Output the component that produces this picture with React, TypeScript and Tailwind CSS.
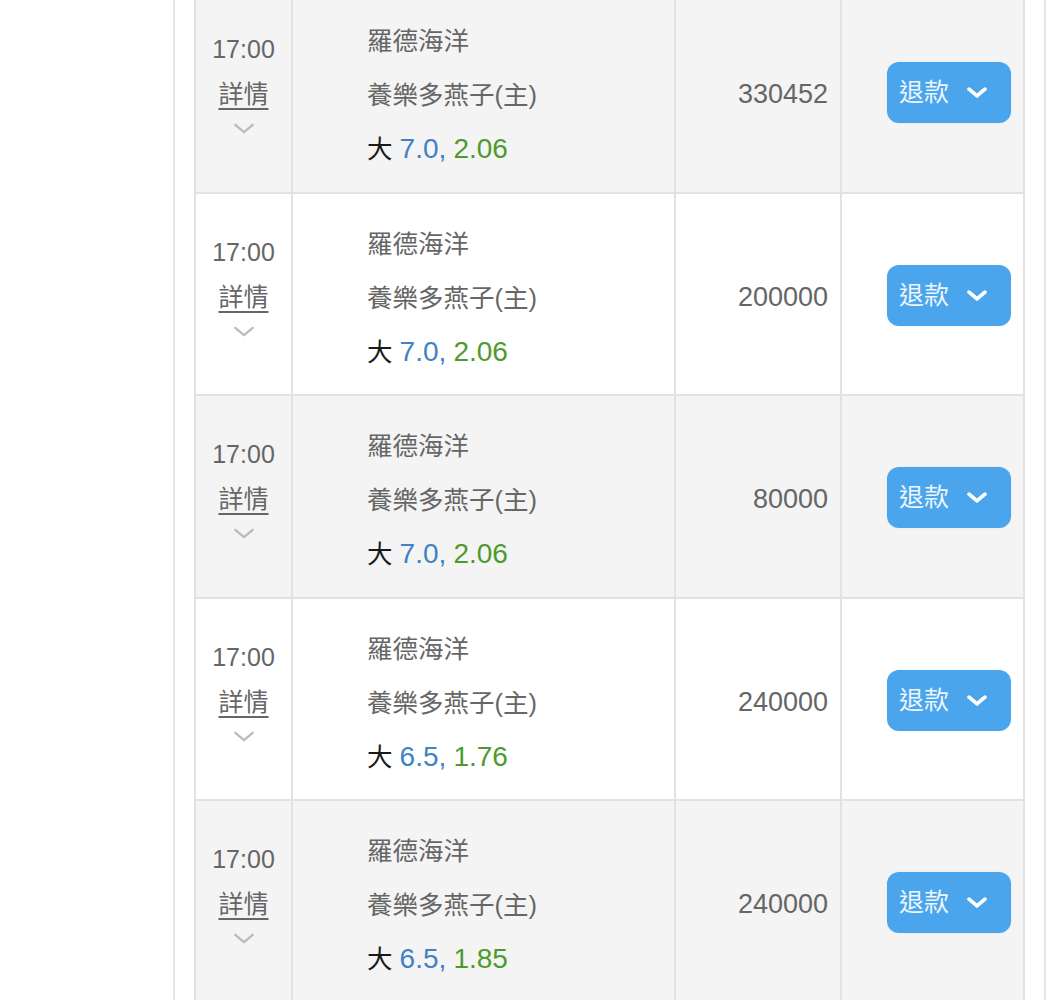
import React from "react";

const rows = [
  { amount: "330452", line: "7.0", odds: "2.06", bg: "bg-[#f4f4f4]" },
  { amount: "200000", line: "7.0", odds: "2.06", bg: "bg-white" },
  { amount: "80000", line: "7.0", odds: "2.06", bg: "bg-[#f4f4f4]" },
  { amount: "240000", line: "6.5", odds: "1.76", bg: "bg-white" },
  { amount: "240000", line: "6.5", odds: "1.85", bg: "bg-[#f4f4f4]" },
];

function Chevron({ className, stroke, width }: { className: string; stroke: string; width: number }) {
  return (
    <svg viewBox="0 0 24 12" className={className} fill="none">
      <path d="M2.5 2 L12 10 L21.5 2" stroke={stroke} strokeWidth={width} strokeLinecap="round" strokeLinejoin="round" />
    </svg>
  );
}

export default function App() {
  return (
    <div
      className="w-[1057px] h-[1000px] overflow-hidden bg-white flex"
      style={{ fontFamily: '"Liberation Sans", "Noto Sans CJK TC", sans-serif' }}
    >
      <div className="w-[173px] shrink-0" />
      <div className="w-[2px] shrink-0 bg-[#e6e6e6]" />
      <div className="w-[19px] shrink-0" />
      <div className="w-[831px] shrink-0 -mt-[9px] border-l-2 border-r-2 border-[#e2e2e2]">
        {rows.map((r, i) => (
          <div key={i} className={`flex h-[202.5px] border-b-2 border-[#e2e2e2] ${r.bg}`}>
            <div className="w-[97px] shrink-0 border-r-2 border-[#e2e2e2] flex flex-col items-center pt-[36px] text-[#666]">
              <div className="text-[25px] leading-[45px]">17:00</div>
              <div className="text-[25px] leading-[45px] underline underline-offset-[5px] decoration-[1.5px] decoration-[#666]">
                詳情
              </div>
              <Chevron className="w-[22px] h-[11px] mt-[6px]" stroke="#bcbcbc" width={2.6} />
            </div>
            <div className="w-[383px] shrink-0 border-r-2 border-[#e2e2e2] pl-[74px] pt-[23px] text-[25.5px] leading-[54px] text-[#666]">
              <div>羅德海洋</div>
              <div>養樂多燕子(主)</div>
              <div>
                <span className="text-[#1a1a1a]">大</span>{" "}
                <span className="text-[#3f83c3] text-[28px]">{r.line},</span>{" "}
                <span className="text-[#4e9b2d] text-[28px]">{r.odds}</span>
              </div>
            </div>
            <div className="w-[166px] shrink-0 border-r-2 border-[#e2e2e2] flex items-center justify-end pr-[12px] pt-[6px] text-[27px] text-[#666]">
              {r.amount}
            </div>
            <div className="flex-1 flex items-center justify-end pr-[12px] pt-[3px]">
              <button className="w-[124px] h-[61px] rounded-[12px] bg-[#4aa5ec] flex items-center pl-[12px] gap-[18px] text-[25px] text-[#eef6fd] shadow-[0_0_2px_rgba(0,0,0,0.08)]">
                <span>退款</span>
                <Chevron className="w-[20px] h-[11px]" stroke="#ffffff" width={4.5} />
              </button>
            </div>
          </div>
        ))}
      </div>
      <div className="w-[19px] shrink-0" />
      <div className="w-[2px] shrink-0 bg-[#e6e6e6]" />
    </div>
  );
}
